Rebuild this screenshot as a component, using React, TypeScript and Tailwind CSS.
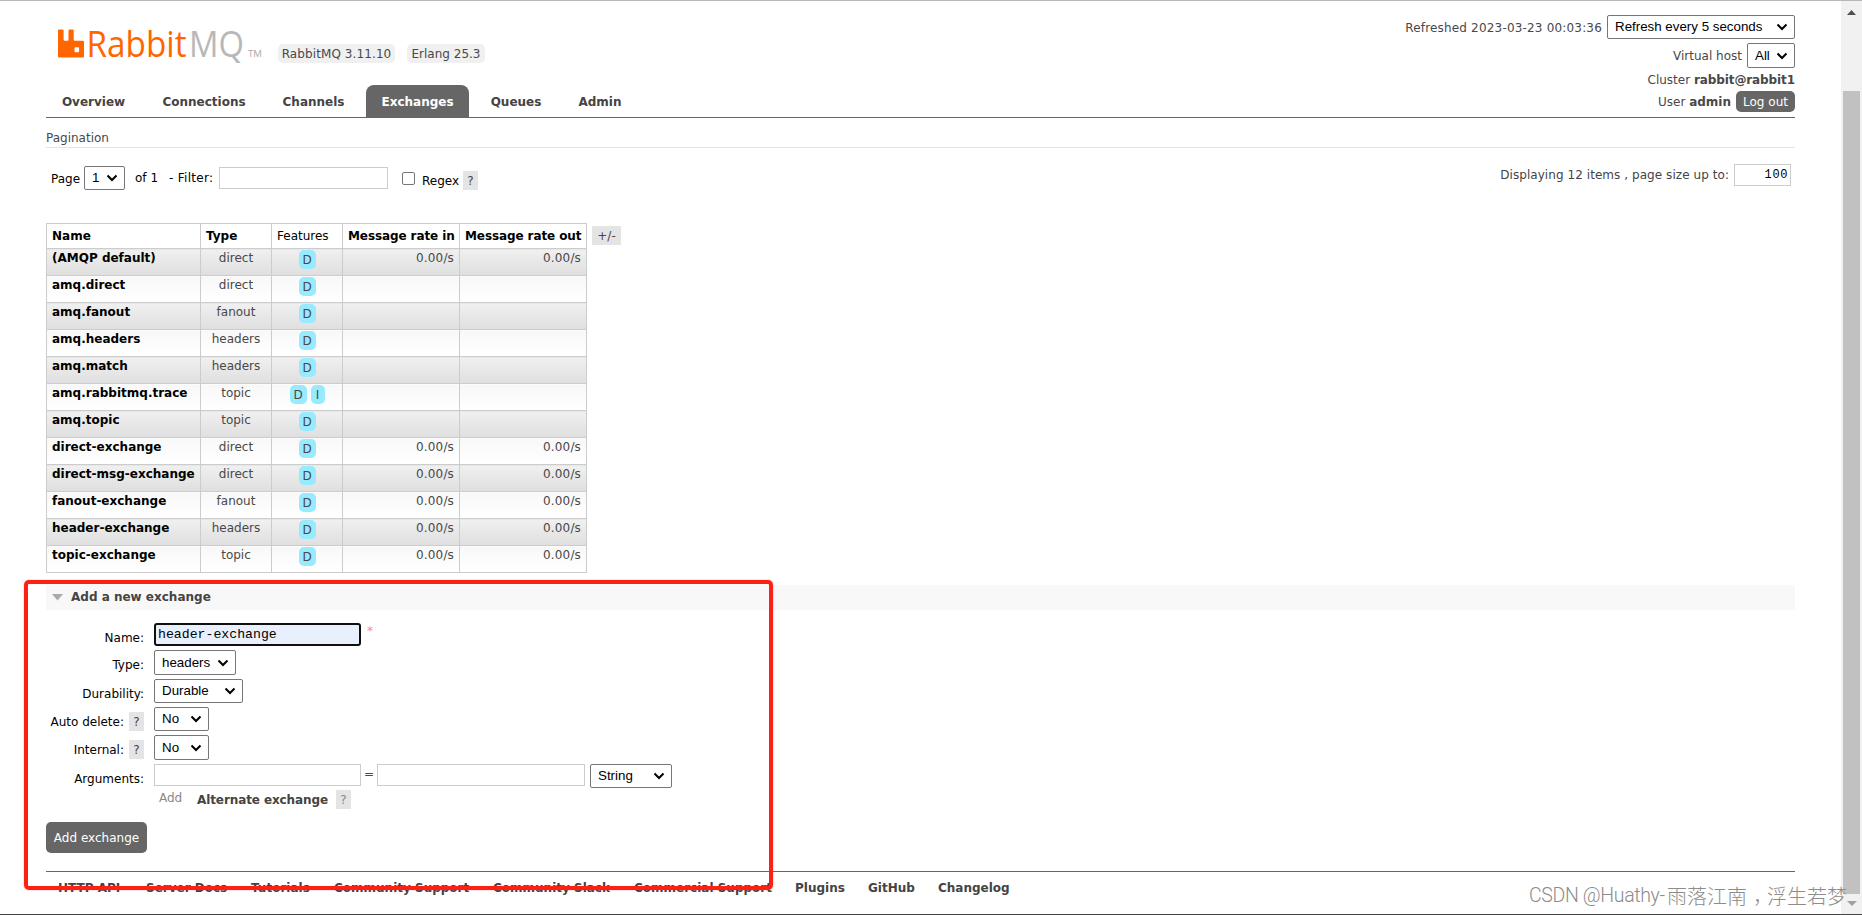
import clsx from "clsx";

const TABS = [
  { label: "Overview", width: "w-[95px]" },
  { label: "Connections", width: "w-[114px]" },
  { label: "Channels", width: "w-[93px]" },
  { label: "Exchanges", width: "w-[103px]" },
  { label: "Queues", width: "w-[82px]" },
  { label: "Admin", width: "w-[74px]" },
];

const EXCHANGES = [
  { name: "(AMQP default)", type: "direct", features: ["D"], rate: "0.00/s" },
  { name: "amq.direct", type: "direct", features: ["D"], rate: "" },
  { name: "amq.fanout", type: "fanout", features: ["D"], rate: "" },
  { name: "amq.headers", type: "headers", features: ["D"], rate: "" },
  { name: "amq.match", type: "headers", features: ["D"], rate: "" },
  { name: "amq.rabbitmq.trace", type: "topic", features: ["D", "I"], rate: "" },
  { name: "amq.topic", type: "topic", features: ["D"], rate: "" },
  { name: "direct-exchange", type: "direct", features: ["D"], rate: "0.00/s" },
  { name: "direct-msg-exchange", type: "direct", features: ["D"], rate: "0.00/s" },
  { name: "fanout-exchange", type: "fanout", features: ["D"], rate: "0.00/s" },
  { name: "header-exchange", type: "headers", features: ["D"], rate: "0.00/s" },
  { name: "topic-exchange", type: "topic", features: ["D"], rate: "0.00/s" },
];

const FOOTER_LINKS = [
  { label: "HTTP API", width: "w-[88px]" },
  { label: "Server Docs", width: "w-[105px]" },
  { label: "Tutorials", width: "w-[83px]" },
  { label: "Community Support", width: "w-[159px]" },
  { label: "Community Slack", width: "w-[141px]" },
  { label: "Commercial Support", width: "w-[161px]" },
  { label: "Plugins", width: "w-[73px]" },
  { label: "GitHub", width: "w-[70px]" },
  { label: "Changelog", width: "w-[80px]" },
];

function Logo() {
  return (
    <svg width="206" height="32" viewBox="0 0 206 32" className="block overflow-visible">
      <path
        fill="#ff6600"
        d="M1 1.500h3.600a1 1 0 0 1 1 1v9.300a1 1 0 0 0 1 1h2.900a1 1 0 0 0 1-1V2.500a1 1 0 0 1 1-1h3.200a1 1 0 0 1 1 1v9.300a1 1 0 0 0 1 1h8.300a1 1 0 0 1 1 1v14.700a1 1 0 0 1-1 1H1a1 1 0 0 1-1-1v-26a1 1 0 0 1 1-1zM16.500 20.200v3a1 1 0 0 0 1 1h2.600a1 1 0 0 0 1-1v-3a1 1 0 0 0-1-1h-2.600a1 1 0 0 0-1 1z"
      />
      <text x="28.500" y="28.600" fontSize="37" fontFamily="Open Sans, sans-serif" fill="#ff6600" textLength="100" lengthAdjust="spacingAndGlyphs">
        Rabbit
      </text>
      <text x="131" y="28.600" fontSize="37" fontFamily="Open Sans, sans-serif" fill="#b8b8b8" textLength="55" lengthAdjust="spacingAndGlyphs">
        MQ
      </text>
      <text x="190" y="28.600" fontSize="9" fontFamily="Open Sans, sans-serif" fill="#aaaaaa" textLength="14" lengthAdjust="spacingAndGlyphs">
        TM
      </text>
    </svg>
  );
}

function Select({ value, className }: { value: string; className: string }) {
  return (
    <div
      className={clsx(
        "flex shrink-0 items-center justify-between whitespace-nowrap rounded-[2px] border border-[#767676] bg-white pl-[7px] pr-[6px] font-['Liberation_Sans',sans-serif] text-[13.333px] text-black",
        className
      )}
    >
      <span>{value}</span>
      <svg width="12" height="8" viewBox="0 0 12 8" fill="none" stroke="#000" strokeWidth="2">
        <path d="M1.500 1.500 6 6l4.500-4.500" />
      </svg>
    </div>
  );
}

function Help({ className }: { className?: string }) {
  return <span className={clsx("flex h-[19px] w-[15px] shrink-0 items-center justify-center bg-[#e4e4e4]", className)}>?</span>;
}

function Field({ label, help, className, children }: { label: string; help?: boolean; className: string; children: React.ReactNode }) {
  return (
    <div className={clsx("flex items-start", className)}>
      <div className="mr-[10px] flex h-[19px] w-[98px] translate-y-[5px] items-center justify-end whitespace-nowrap text-black">
        {label}
        {help && <Help className="ml-[5px] text-[#444]" />}
      </div>
      {children}
    </div>
  );
}

export default function App() {
  return (
    <div className="relative flex h-[915px] w-[1862px] overflow-hidden border-t border-b border-t-[#b8b8b8] border-b-[#444] bg-white font-['DejaVu_Sans',sans-serif] text-[12px] leading-[16px] text-[#484848]">
      <div className="ml-[46px] w-[1749px] shrink-0">
        <header className="flex h-[117px] justify-between border-b border-[#666]">
          <div className="flex flex-col justify-between">
            <div className="flex pt-[27px]">
              <div className="ml-[12px] w-[220px]">
                <Logo />
              </div>
              <span className="mt-4 flex h-[19px] w-[117px] items-center justify-center whitespace-nowrap rounded-[5px] bg-[#f0f0f0] tracking-[0.1px]">RabbitMQ 3.11.10</span>
              <span className="mt-4 ml-3 flex h-[19px] w-[78px] items-center justify-center whitespace-nowrap rounded-[5px] bg-[#f0f0f0]">Erlang 25.3</span>
            </div>
            <nav className="flex gap-[6px]">
              {TABS.map((tab) => (
                <a
                  key={tab.label}
                  className={clsx(
                    "flex h-8 items-center justify-center rounded-t-[8px] pt-px font-bold",
                    tab.width,
                    tab.label === "Exchanges" ? "bg-[#666] text-white" : "text-[#444]"
                  )}
                >
                  {tab.label}
                </a>
              ))}
            </nav>
          </div>
          <div className="flex flex-col items-end pt-[14px]">
            <div className="flex items-center gap-[5px]">
              <span className="pt-px tracking-[0.18px]">Refreshed 2023-03-23 00:03:36</span>
              <Select value="Refresh every 5 seconds" className="h-6 w-[188px]" />
            </div>
            <div className="mt-1 flex items-center gap-[5px]">
              Virtual host
              <Select value="All" className="h-[25px] w-[48px]" />
            </div>
            <div className="mt-1">
              Cluster <b className="tracking-[-0.1px]">rabbit@rabbit1</b>
            </div>
            <div className="mt-[3px] flex items-center gap-[5px]">
              <span>
                User <b>admin</b>
              </span>
              <button className="h-[21px] w-[59px] rounded-[5px] bg-[#666] text-white">Log out</button>
            </div>
          </div>
        </header>

        <h2 className="h-[30px] border-b border-[#e4e4e4] pt-[12px]">Pagination</h2>
        <div className="flex h-[75px] items-start pt-[18px] text-black">
          <span className="ml-[5px] mt-[5px] w-[33px]">Page</span>
          <Select value="1" className="h-6 w-[41px]" />
          <span className="ml-[10px] mt-1 w-[34px]">of 1</span>
          <span className="mt-1 w-[50px] whitespace-nowrap tracking-[0.3px]">- Filter:</span>
          <div className="mt-px h-[22px] w-[169px] border border-[#ccc]" />
          <div className="ml-[14px] mt-[6px] h-[13px] w-[13px] rounded-[2px] border border-[#767676]" />
          <span className="ml-[7px] mt-[7px] w-[41px]">Regex</span>
          <Help className="mt-[5px] text-[#444]" />
          <div className="ml-auto mr-1 mt-[-2px] flex items-center gap-[5px] tracking-[0.06px] text-[#444]">
            Displaying 12 items , page size up to:
            <span className="flex h-[22px] w-[57px] items-center justify-end border border-[#ccc] pr-[2px] font-['Liberation_Mono',monospace] text-[12px] tracking-[0.6px] text-black">100</span>
          </div>
        </div>

        <div className="flex items-start">
          <table className="w-[541px] table-fixed border-collapse">
            <colgroup>
              <col className="w-[154px]" />
              <col className="w-[71px]" />
              <col className="w-[71px]" />
              <col className="w-[117px]" />
              <col className="w-[127px]" />
            </colgroup>
            <thead>
              <tr className="h-[25px] whitespace-nowrap text-left text-black [&>th]:border [&>th]:border-[#ccc] [&>th]:px-[5px] [&>th]:py-0">
                <th>Name</th>
                <th>Type</th>
                <th className="font-normal">Features</th>
                <th className="tracking-[-0.1px]">Message rate in</th>
                <th className="tracking-[-0.1px]">Message rate out</th>
              </tr>
            </thead>
            <tbody>
              {EXCHANGES.map((row, i) => (
                <tr
                  key={row.name}
                  className={clsx(
                    "h-[27px] align-top [&>td]:border [&>td]:border-[#ccc] [&>td]:px-[5px] [&>td]:pt-px [&>td]:pb-[2px]",
                    i % 2 === 0 ? "[&>td]:bg-linear-to-b [&>td]:from-[#f0f0f0] [&>td]:to-[#dfdfdf]" : "[&>td]:bg-linear-to-b [&>td]:from-[#f8f8f8] [&>td]:to-white"
                  )}
                >
                  <td className="whitespace-nowrap font-bold text-black">{row.name}</td>
                  <td className="text-center">{row.type}</td>
                  <td>
                    <div className="flex justify-center gap-1">
                      {row.features.map((feature) => (
                        <span key={feature} className={clsx("flex h-[19px] items-center justify-center rounded-[5px] bg-[#98ebff]", feature === "D" ? "w-[17px]" : "w-[14px]")}>
                          {feature}
                        </span>
                      ))}
                    </div>
                  </td>
                  <td className="text-right tracking-[0.15px]">{row.rate}</td>
                  <td className="text-right tracking-[0.15px]">{row.rate}</td>
                </tr>
              ))}
            </tbody>
          </table>
          <span className="ml-[5px] mt-[3px] flex h-[19px] w-[29px] items-center justify-center bg-[#e4e4e4]">+/-</span>
        </div>

        <h2 className="mt-3 flex h-[25px] items-center bg-[#f8f8f8] pb-px pl-[6px] font-bold text-[#444]">
          <svg width="11" height="7" viewBox="0 0 11 7" className="mr-2 mt-px">
            <path d="M0 0h11L5.500 6.500z" fill="#aaa" />
          </svg>
          Add a new exchange
        </h2>

        <form className="pt-[13px]">
          <Field label="Name:" className="h-[27px]">
            <div className="flex h-[23px] w-[207px] items-center rounded-[3px] border-2 border-[#101010] bg-[#e8f0fe] pl-[2px] font-['Liberation_Mono',monospace] text-[13.200px] text-black">
              header-exchange
            </div>
            <span className="ml-[6px] text-[#f88]">*</span>
          </Field>
          <Field label="Type:" className="h-[29px]">
            <Select value="headers" className="h-[25px] w-[82px]" />
          </Field>
          <Field label="Durability:" className="h-[28px]">
            <Select value="Durable" className="h-6 w-[89px]" />
          </Field>
          <Field label="Auto delete:" help className="h-[28px]">
            <Select value="No" className="h-6 w-[55px]" />
          </Field>
          <Field label="Internal:" help className="h-[29px]">
            <Select value="No" className="h-[25px] w-[55px]" />
          </Field>
          <Field label="Arguments:" className="h-[26px]">
            <div className="h-[22px] w-[207px] border border-[#ccc]" />
            <span className="w-4 pt-[2px] text-center">=</span>
            <div className="h-[22px] w-[208px] border border-[#ccc]" />
            <Select value="String" className="ml-[5px] h-6 w-[82px]" />
          </Field>
          <div className="flex h-8 items-start pl-[113px]">
            <span className="w-[38px] text-[#888]">Add</span>
            <span className="mt-[2px] w-[139px] whitespace-nowrap font-bold tracking-[-0.1px] text-[#444]">Alternate exchange</span>
            <Help className="text-[#888]" />
          </div>
          <button className="block h-[31px] w-[101px] whitespace-nowrap rounded-[5px] bg-[#666] text-white">Add exchange</button>
        </form>

        <footer className="mt-[18px] flex border-t border-[#666] pt-[8px] pl-[12px] font-bold text-[#444]">
          {FOOTER_LINKS.map((link) => (
            <a key={link.label} className={clsx("shrink-0 whitespace-nowrap", link.width)}>
              {link.label}
            </a>
          ))}
        </footer>
      </div>

      <aside className="ml-auto flex w-[21px] flex-col items-center bg-[#f1f1f1]">
        <svg width="9" height="5" viewBox="0 0 9 5" className="mt-[9px]">
          <path d="M4.500 0 9 5H0z" fill="#505050" />
        </svg>
        <div className="mt-[76px] h-[803px] w-[17px] bg-[#c1c1c1]" />
        <svg width="10" height="5" viewBox="0 0 10 5" className="mt-[7px]">
          <path d="M0 0h10L5 5z" fill="#a0a0a0" />
        </svg>
      </aside>

      <div className="absolute left-[24px] top-[579px] h-[310px] w-[749px] rounded-[5px] border-4 border-[#ff2015] shadow-[0_0_1px_#ff2015]" />
      <div className="absolute left-[1529px] top-[880px] flex whitespace-nowrap text-[20px] leading-[30px] text-[#8c8c8c]">
        <span className="w-[138px] font-['Roboto',sans-serif] text-[19.500px] font-light tracking-[-0.350px]">CSDN @Huathy-</span>
        <span className="font-['Noto_Sans_CJK_SC',sans-serif] font-light">
          雨落江南<span className="relative left-[6px]">，</span>浮生若梦
        </span>
      </div>
    </div>
  );
}
